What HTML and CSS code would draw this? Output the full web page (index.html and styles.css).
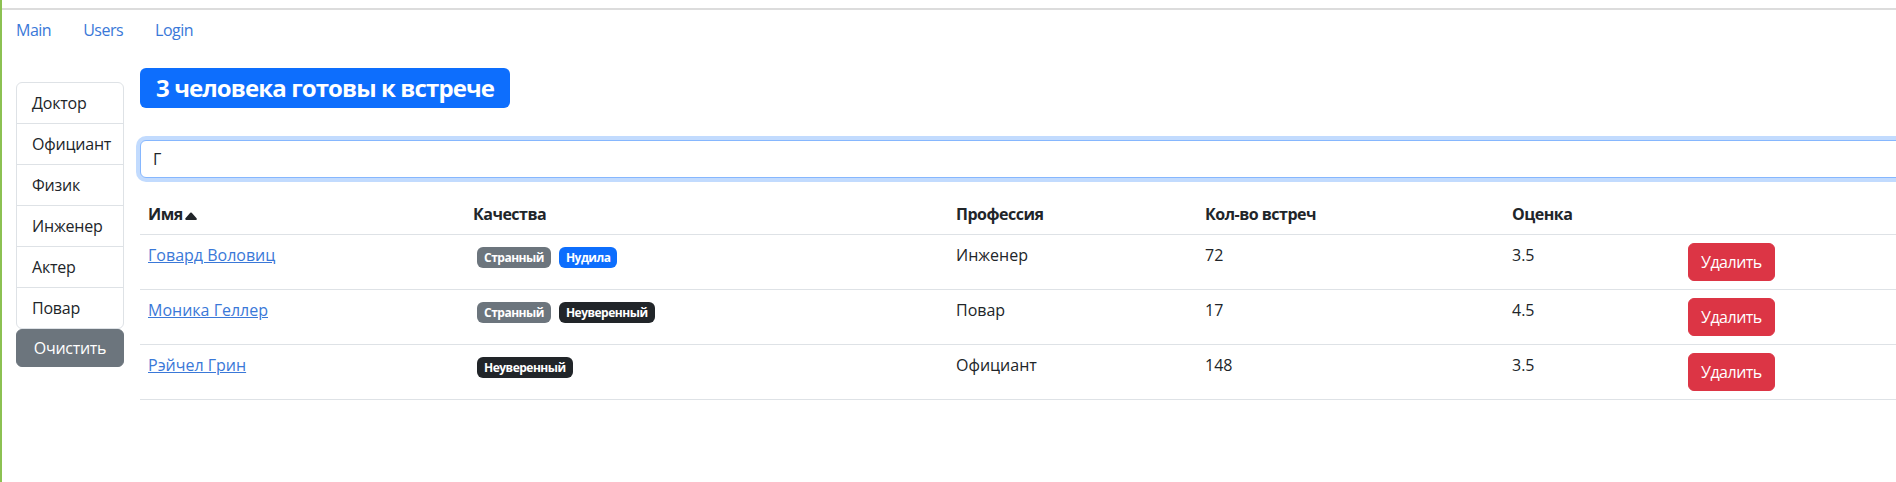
FILE: index.html
```html
<!DOCTYPE html>
<html lang="ru">
<head>
<meta charset="utf-8">
<title>Users</title>
<link rel="stylesheet" href="styles.css">
</head>
<body>
<div class="page">
  <nav class="topnav">
    <a class="nav-link" href="#">Main</a>
    <a class="nav-link" href="#">Users</a>
    <a class="nav-link" href="#">Login</a>
  </nav>
  <div class="layout">
    <aside class="sidebar">
      <ul class="list-group">
        <li class="list-item">Доктор</li>
        <li class="list-item">Официант</li>
        <li class="list-item">Физик</li>
        <li class="list-item">Инженер</li>
        <li class="list-item">Актер</li>
        <li class="list-item">Повар</li>
      </ul>
      <button class="btn btn-secondary">Очистить</button>
    </aside>
    <main class="content">
      <h2 class="heading"><span class="heading-badge">3 человека готовы к встрече</span></h2>
      <input class="search" type="text" value="Г">
      <table class="table">
        <colgroup>
          <col class="c-name"><col class="c-qual"><col class="c-prof"><col class="c-meet"><col class="c-rate"><col class="c-act">
        </colgroup>
        <thead>
          <tr>
            <th>Имя<svg class="caret" viewBox="0 0 16 16" width="16" height="16"><path d="m7.247 4.86-4.796 5.481c-.566.647-.106 1.659.753 1.659h9.592a1 1 0 0 0 .753-1.659l-4.796-5.48a1 1 0 0 0-1.506 0z"/></svg></th>
            <th>Качества</th>
            <th>Профессия</th>
            <th>Кол-во встреч</th>
            <th>Оценка</th>
            <th></th>
          </tr>
        </thead>
        <tbody>
          <tr>
            <td><a class="name-link" href="#">Говард Воловиц</a></td>
            <td><span class="badge bg-secondary">Странный</span><span class="badge bg-primary">Нудила</span></td>
            <td>Инженер</td>
            <td>72</td>
            <td>3.5</td>
            <td><button class="btn btn-danger">Удалить</button></td>
          </tr>
          <tr>
            <td><a class="name-link" href="#">Моника Геллер</a></td>
            <td><span class="badge bg-secondary">Странный</span><span class="badge bg-dark">Неуверенный</span></td>
            <td>Повар</td>
            <td>17</td>
            <td>4.5</td>
            <td><button class="btn btn-danger">Удалить</button></td>
          </tr>
          <tr>
            <td><a class="name-link" href="#">Рэйчел Грин</a></td>
            <td><span class="badge bg-dark">Неуверенный</span></td>
            <td>Официант</td>
            <td>148</td>
            <td>3.5</td>
            <td><button class="btn btn-danger">Удалить</button></td>
          </tr>
        </tbody>
      </table>
    </main>
  </div>
</div>
</body>
</html>
```

FILE: styles.css
```css
* { box-sizing: border-box; }

html, body {
  margin: 0;
  padding: 0;
  background: #fff;
  overflow: hidden;
}

body {
  font-family: "Open Sans", "Noto Sans", sans-serif;
  font-size: 16px;
  line-height: 24px;
  color: #212529;
  padding-top: 8px;
}

body::before {
  content: "";
  position: fixed;
  left: 0;
  top: 0;
  bottom: 0;
  width: 2px;
  background: #8cc152;
  z-index: 5;
}

.page {
  border-top: 2px solid #dcdcdc;
}

.topnav {
  display: flex;
}

.nav-link {
  padding: 8px 16px;
  color: #3a78d8;
  text-decoration: none;
  letter-spacing: -0.5px;
}

.layout {
  display: flex;
  gap: 16px;
  padding-left: 16px;
}

.sidebar {
  flex: 0 0 108px;
  width: 108px;
  min-width: 0;
  margin-top: 32px;
}

.list-group {
  list-style: none;
  margin: 0;
  padding: 0;
  border: 1px solid #dee2e6;
  border-radius: 6px;
}

.list-item {
  padding: 8px 15px;
  border-top: 1px solid #dee2e6;
  white-space: nowrap;
  letter-spacing: -0.2px;
}

.list-item:first-child {
  border-top: 0;
}

.btn {
  font-family: inherit;
  font-size: 16px;
  line-height: 24px;
  padding: 6px 12px;
  border: 1px solid transparent;
  border-radius: 6px;
  color: #fff;
  cursor: pointer;
}

.btn-secondary {
  display: block;
  width: 100%;
  background: #6c757d;
  border-color: #6c757d;
  letter-spacing: -0.3px;
}

.btn-danger {
  background: #dc3545;
  border-color: #dc3545;
  letter-spacing: -0.5px;
}

.content {
  flex: 0 0 1800px;
}

.heading {
  margin: 18px 0 0;
  font-size: 24px;
  line-height: 40px;
  font-weight: 700;
}

.heading-badge {
  display: inline-block;
  background: #0d6efd;
  color: #fff;
  line-height: 24px;
  padding: 8px 16px;
  border-radius: 6px;
  letter-spacing: -0.9px;
}

.search {
  display: block;
  width: 100%;
  margin-top: 32px;
  height: 38px;
  padding: 6px 12px;
  font-family: inherit;
  font-size: 16px;
  line-height: 24px;
  color: #212529;
  border: 1px solid #86b7fe;
  border-radius: 6px;
  box-shadow: 0 0 0 4px rgba(13, 110, 253, 0.25);
  outline: none;
}

.table {
  margin-top: 16px;
  width: 100%;
  border-collapse: collapse;
  table-layout: fixed;
  vertical-align: top;
}

.c-name { width: 325px; }
.c-qual { width: 483px; }
.c-prof { width: 249px; }
.c-meet { width: 307px; }
.c-rate { width: 176px; }

.table th,
.table td {
  padding: 8px;
  text-align: left;
  vertical-align: top;
  border-bottom: 1px solid #dee2e6;
}

.table th {
  font-weight: 700;
  letter-spacing: -0.5px;
}

.caret {
  width: 16px;
  height: 16px;
  vertical-align: -4px;
  fill: #212529;
}

.name-link {
  color: #3a78d8;
  text-decoration: underline;
}

.badge {
  display: inline-block;
  margin: 4px;
  padding: 4px 7px;
  font-size: 12px;
  line-height: 13px;
  font-weight: 700;
  color: #fff;
  border-radius: 6px;
  vertical-align: top;
  letter-spacing: -0.5px;
}

.bg-secondary { background: #6c757d; }
.bg-primary { background: #0d6efd; }
.bg-dark { background: #212529; }
```
